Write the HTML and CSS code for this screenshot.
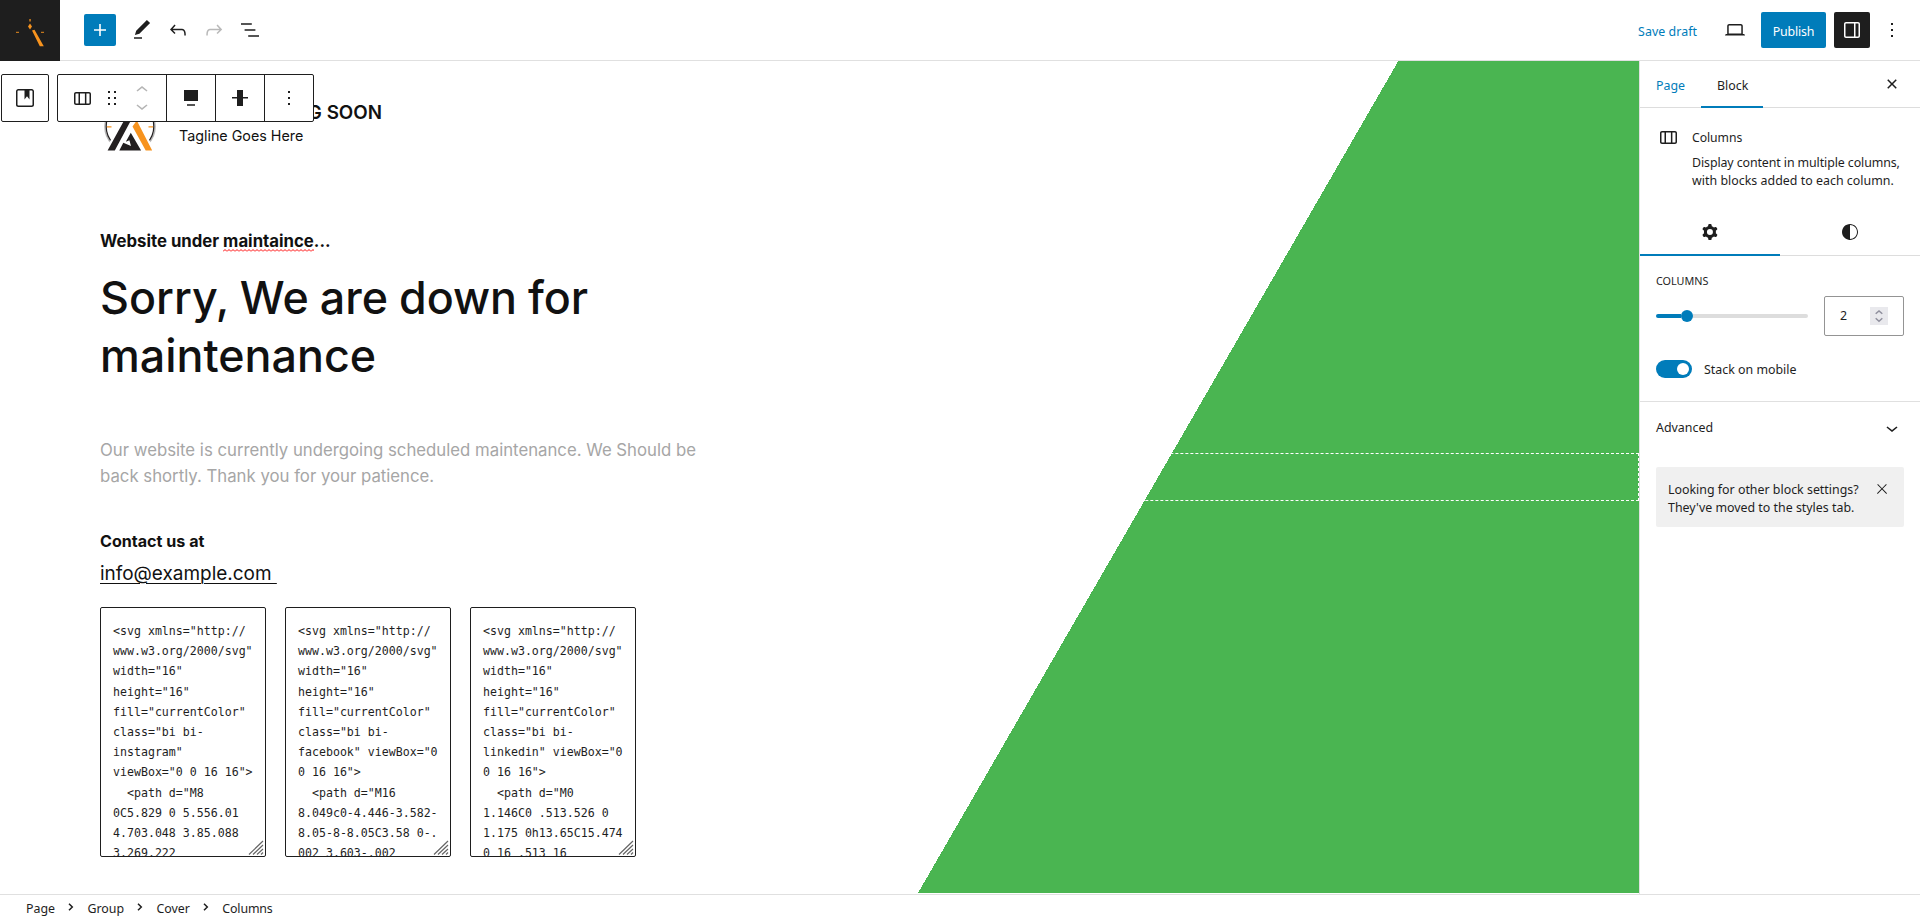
FILE: index.html
```html
<!DOCTYPE html>
<html lang="en">
<head>
<meta charset="utf-8">
<title>Edit Page</title>
<link rel="stylesheet" href="styles.css">
</head>
<body>
<header class="topbar">
  <a class="site-logo">
    <svg width="60" height="61" viewBox="0 0 60 61"><g fill="#f7931e"><path d="M32 30.5l2.5-.8 9.3 16.6h-4zM30 23.6l2 2.9-2 3-2-3z"/><path d="M29.2 19h1.7v2.5h-1.7zM16 31.8h3v1.2h-3zM41 31.8h3v1.2h-3z" opacity=".75"/></g></svg>
  </a>
  <button class="inserter"><svg class="icon" viewBox="0 0 24 24"><path d="M18 11.2h-5.2V6h-1.6v5.2H6v1.6h5.2V18h1.6v-5.2H18z"/></svg></button>
  <div class="tools">
    <button class="tool"><svg class="icon" viewBox="0 0 24 24"><path d="M20.1 5.1L16.9 2 6.2 12.7l-1.3 4.4 4.5-1.3L20.1 5.1zM4 20.8h8v-1.5H4v1.5z"/></svg></button>
    <button class="tool"><svg class="icon" viewBox="0 0 24 24"><path d="M18.3 11.7c-.6-.6-1.4-.9-2.3-.9H6.7l2.9-3.3-1.1-1-4.5 5L8.5 16l1-1-2.7-2.7H16c.5 0 .9.2 1.3.5 1 1 1 3.4 1 4.5v.3h1.5v-.2c0-1.5 0-4.3-1.5-5.7z"/></svg></button>
    <button class="tool disabled"><svg class="icon" viewBox="0 0 24 24"><path d="M15.6 6.5l-1.1 1 2.9 3.3H8c-.9 0-1.7.3-2.3.9-1.4 1.5-1.4 4.2-1.4 5.6v.2h1.5v-.3c0-1.1 0-3.5 1-4.5.3-.3.7-.5 1.3-.5h9.2L14.5 15l1.1 1.1 4.6-4.6-4.6-5z"/></svg></button>
    <button class="tool"><svg class="icon" viewBox="0 0 24 24"><path d="M13.8 5.2H3v1.5h10.8V5.2zm-3.6 12v1.5H21v-1.5H10.2zm7.2-6H6.6v1.5h10.8v-1.5z"/></svg></button>
  </div>
  <div class="actions">
    <a class="save-draft">Save draft</a>
    <button class="tool preview"><svg class="icon" viewBox="0 0 24 24"><path d="M20.5 16h-.7V8c0-1.1-.9-2-2-2H6.2c-1.1 0-2 .9-2 2v8h-.7c-.8 0-1.5.7-1.5 1.5h20c0-.8-.7-1.5-1.5-1.5zM5.7 8c0-.3.2-.5.5-.5h11.6c.3 0 .5.2.5.5v7.6H5.7V8z"/></svg></button>
    <button class="publish">Publish</button>
    <button class="tool pressed"><svg class="icon" viewBox="0 0 24 24"><path fill-rule="evenodd" d="M18 4H6c-1.1 0-2 .9-2 2v12c0 1.1.9 2 2 2h12c1.1 0 2-.9 2-2V6c0-1.1-.9-2-2-2zm-4 14.5H6c-.3 0-.5-.2-.5-.5V6c0-.3.2-.5.5-.5h8v13zm4.5-.5c0 .3-.2.5-.5.5h-2.5v-13H18c.3 0 .5.2.5.5v12z"/></svg></button>
    <button class="tool more"><svg class="icon" viewBox="0 0 24 24"><path d="M13 19h-2v-2h2v2zm0-6h-2v-2h2v2zm0-6h-2V5h2v2z"/></svg></button>
  </div>
</header>

<div class="workspace">
  <main class="canvas">
    <div class="selection"></div>
    <div class="brand">
      <svg class="brand-logo" width="60" height="60" viewBox="0 0 60 60">
        <circle cx="30" cy="29.500" r="25" fill="none" stroke="#b5b5b5" stroke-width="1.6"/>
        <circle cx="30" cy="29.500" r="23.8" fill="none" stroke="#231f20" stroke-width="1.2"/>
        <path d="M5 53.6L26 15h8l21 38.6V60H5z" fill="#fff"/>
        <path d="M7.6 53.4L26 20l5 3.3L14.8 53.4zM19.3 53.4l4-7.6 7.7 3.2-1.6-5.8-3.6 1.600 5-9 10.3 17.6z" fill="#231f20"/>
        <path d="M32.5 29.5l4.3-6 15.4 29.9h-6.5zM7 29.3h4.5v1.2H7zM48.5 29.3h4.5v1.2h-4.5z" fill="#f7931e"/>
      </svg>
      <div class="brand-text">
        <h2 class="site-title">SITE COMING SOON</h2>
        <p class="tagline">Tagline Goes Here</p>
      </div>
    </div>
    <p class="notice-line">Website under <span class="misspelled">maintaince</span>...</p>
    <h1 class="headline">Sorry, We are down for<br>maintenance</h1>
    <p class="lede">Our website is currently undergoing scheduled maintenance. We Should be<br>back shortly. Thank you for your patience.</p>
    <p class="contact">Contact us at</p>
    <p class="email"><a>info@example.com&nbsp;</a></p>
    <div class="codes">
      <div class="code"><pre>&lt;svg xmlns="http://
www.w3.org/2000/svg"
width="16"
height="16"
fill="currentColor"
class="bi bi-
instagram"
viewBox="0 0 16 16"&gt;
  &lt;path d="M8
0C5.829 0 5.556.01
4.703.048 3.85.088
3.269.222</pre><svg class="grip" viewBox="0 0 16 15"><path d="M1 14.5L15 1M5 14.5L15 5M9 14.5L15 9M13 14.5L15 12.5"/></svg></div>
      <div class="code"><pre>&lt;svg xmlns="http://
www.w3.org/2000/svg"
width="16"
height="16"
fill="currentColor"
class="bi bi-
facebook" viewBox="0
0 16 16"&gt;
  &lt;path d="M16
8.049c0-4.446-3.582-
8.05-8-8.05C3.58 0-.
002 3.603-.002</pre><svg class="grip" viewBox="0 0 16 15"><path d="M1 14.5L15 1M5 14.5L15 5M9 14.5L15 9M13 14.5L15 12.5"/></svg></div>
      <div class="code"><pre>&lt;svg xmlns="http://
www.w3.org/2000/svg"
width="16"
height="16"
fill="currentColor"
class="bi bi-
linkedin" viewBox="0
0 16 16"&gt;
  &lt;path d="M0
1.146C0 .513.526 0
1.175 0h13.65C15.474
0 16 .513 16</pre><svg class="grip" viewBox="0 0 16 15"><path d="M1 14.5L15 1M5 14.5L15 5M9 14.5L15 9M13 14.5L15 12.5"/></svg></div>
    </div>

    <div class="block-toolbar">
      <div class="bar parent"><button class="tb"><svg class="icon" viewBox="0 0 24 24"><path d="M18.7 3H5.3C4 3 3 4 3 5.3v13.4C3 20 4 21 5.3 21h13.4c1.3 0 2.3-1 2.3-2.3V5.3C21 4 20 3 18.7 3zm.8 15.7c0 .4-.4.8-.8.8H5.3c-.4 0-.8-.4-.8-.8V5.3c0-.4.4-.8.8-.8h6.2v8.9l2.5-3.1 2.5 3.1V4.5h2.2c.4 0 .8.4.8.8v13.4z"/></svg></button></div>
      <div class="bar">
        <div class="tb-group first">
          <svg class="icon" viewBox="0 0 24 24"><path fill-rule="evenodd" d="M19 6H6c-1.1 0-2 .9-2 2v9c0 1.1.9 2 2 2h13c1.1 0 2-.9 2-2V8c0-1.1-.9-2-2-2zm-4.1 1.5v10H10v-10h4.9zM5.5 17V8c0-.3.2-.5.5-.5h2.5v10H6c-.3 0-.5-.2-.5-.5zm14 0c0 .3-.2.5-.5.5h-2.6v-10H19c.3 0 .5.2.5.5v9z"/></svg>
          <svg class="icon drag" viewBox="0 0 24 24"><path d="M8 7h2V5H8v2zm0 6h2v-2H8v2zm0 6h2v-2H8v2zm6-14v2h2V5h-2zm0 8h2v-2h-2v2zm0 6h2v-2h-2v2z"/></svg>
          <div class="movers">
            <svg class="icon" viewBox="0 0 24 24"><path d="M6.5 12.4L12 8l5.5 4.4-.9 1.2L12 10l-4.5 3.6-1-1.2z"/></svg>
            <svg class="icon" viewBox="0 0 24 24"><path d="M17.5 11.6L12 16l-5.5-4.4.9-1.2L12 14l4.5-3.6 1 1.2z"/></svg>
          </div>
        </div>
        <div class="tb-group"><svg class="icon" viewBox="0 0 24 24"><path d="M5 4v11h14V4H5zm3 15.8h8v-1.5H8v1.5z"/></svg></div>
        <div class="tb-group"><svg class="icon" viewBox="0 0 24 24"><path d="M20 11h-5V4H9v7H4v1.5h5V20h6v-7.5h5z"/></svg></div>
        <div class="tb-group"><svg class="icon" viewBox="0 0 24 24"><path d="M13 19h-2v-2h2v2zm0-6h-2v-2h2v2zm0-6h-2V5h2v2z"/></svg></div>
      </div>
    </div>
  </main>

  <aside class="sidebar">
    <div class="tabs">
      <button class="tab link">Page</button>
      <button class="tab active">Block</button>
      <svg class="icon close" viewBox="0 0 24 24"><path d="M12 13.06l3.712 3.713 1.061-1.06L13.061 12l3.712-3.712-1.06-1.06L12 10.938 8.288 7.227l-1.061 1.06L10.939 12l-3.712 3.712 1.06 1.061L12 13.061z"/></svg>
    </div>
    <div class="card">
      <svg class="icon" viewBox="0 0 24 24"><path fill-rule="evenodd" d="M19 6H6c-1.1 0-2 .9-2 2v9c0 1.1.9 2 2 2h13c1.1 0 2-.9 2-2V8c0-1.1-.9-2-2-2zm-4.1 1.5v10H10v-10h4.9zM5.5 17V8c0-.3.2-.5.5-.5h2.5v10H6c-.3 0-.5-.2-.5-.5zm14 0c0 .3-.2.5-.5.5h-2.6v-10H19c.3 0 .5.2.5.5v9z"/></svg>
      <div>
        <h3 class="card-title">Columns</h3>
        <p class="card-desc">Display content in multiple columns,<br><span class="loose">with blocks added to each column.</span></p>
      </div>
    </div>
    <div class="icon-tabs">
      <button class="icon-tab active"><svg class="icon" viewBox="0 0 24 24"><path fill-rule="evenodd" d="M10.289 4.836A1 1 0 0111.275 4h1.306a1 1 0 01.987.836l.244 1.466c.787.26 1.503.679 2.108 1.218l1.393-.522a1 1 0 011.216.437l.653 1.13a1 1 0 01-.23 1.273l-1.148.944a6.025 6.025 0 010 2.435l1.149.946a1 1 0 01.23 1.272l-.653 1.13a1 1 0 01-1.216.437l-1.394-.522c-.605.54-1.32.958-2.108 1.218l-.244 1.466a1 1 0 01-.987.836h-1.306a1 1 0 01-.986-.836l-.244-1.466a5.995 5.995 0 01-2.108-1.218l-1.394.522a1 1 0 01-1.217-.436l-.653-1.131a1 1 0 01.23-1.272l1.149-.946a6.026 6.026 0 010-2.435l-1.148-.944a1 1 0 01-.23-1.272l.653-1.131a1 1 0 011.217-.437l1.393.522a5.994 5.994 0 012.108-1.218l.244-1.466zM14.929 12a3 3 0 11-6 0 3 3 0 016 0z"/></svg></button>
      <button class="icon-tab"><svg class="icon" viewBox="0 0 24 24"><path fill-rule="evenodd" d="M12 4c-4.4 0-8 3.6-8 8v.1c0 4.1 3.2 7.5 7.2 7.9h.8c4.4 0 8-3.6 8-8s-3.6-8-8-8zm0 15V5c3.9 0 7 3.1 7 7s-3.1 7-7 7z"/></svg></button>
    </div>
    <section class="settings">
      <h4 class="label">COLUMNS</h4>
      <div class="range-row">
        <div class="range"><div class="fill"></div><div class="thumb"></div><div class="rest"></div></div>
        <div class="number"><span>2</span>
          <svg class="spin" width="18" height="18" viewBox="0 0 18 18"><rect width="18" height="18" fill="#e9e9ed"/><path d="M5.7 6.8L9 3.9l3.3 2.9M5.7 11.3L9 14.2l3.3-2.9" fill="none" stroke="#8f8f9d" stroke-width="1.5"/></svg>
        </div>
      </div>
      <div class="toggle-row"><span class="toggle"><i class="knob"></i></span><span class="toggle-label">Stack on mobile</span></div>
    </section>
    <div class="advanced"><span>Advanced</span><svg class="icon" viewBox="0 0 24 24"><path d="M17.5 11.6L12 16l-5.5-4.4.9-1.2L12 14l4.5-3.6 1 1.2z"/></svg></div>
    <div class="hint">
      <p>Looking for other block settings?<br>They've moved to the styles tab.</p>
      <svg class="hint-close" width="16" height="16" viewBox="0 0 24 24"><path d="M13 11.8l6.1-6.3-1-1-6.1 6.2-6.1-6.2-1 1 6.1 6.3-6.5 6.7 1 1 6.5-6.6 6.5 6.6 1-1z"/></svg>
    </div>
  </aside>
</div>

<footer class="breadcrumb">
  <span>Page</span><svg class="sep" viewBox="0 0 6 8"><path d="M1 .7l3.3 3.3L1 7.3"/></svg>
  <span>Group</span><svg class="sep" viewBox="0 0 6 8"><path d="M1 .7l3.3 3.3L1 7.3"/></svg>
  <span>Cover</span><svg class="sep" viewBox="0 0 6 8"><path d="M1 .7l3.3 3.3L1 7.3"/></svg>
  <span class="current">Columns</span>
</footer>
</body>
</html>
```
FILE: styles.css
```css
* { box-sizing: border-box; }
body {
  margin: 0;
  width: 1920px;
  height: 919px;
  display: flex;
  flex-direction: column;
  overflow: hidden;
  background: #fff;
  color: #1e1e1e;
  font: 12.4px/18px "Noto Sans", sans-serif;
}
h1, h2, h3, h4, p, pre { margin: 0; font-weight: 400; }
button { border: 0; padding: 0; background: none; font: inherit; color: inherit; }
svg { display: block; flex: none; }
.icon { width: 24px; height: 24px; fill: currentColor; }

/* Top bar */
.topbar { height: 61px; flex: none; display: flex; align-items: center; border-bottom: 1px solid #e0e0e0; }
.site-logo { width: 60px; height: 61px; background: #1e1e1e; margin-bottom: -1px; }
.inserter {
  width: 32px; height: 32px; margin-left: 24px; border-radius: 2px;
  background: #007cba; color: #fff; display: flex; align-items: center; justify-content: center;
}
.tools { display: flex; margin-left: 8px; }
.tool { width: 36px; height: 36px; display: flex; align-items: center; justify-content: center; }
.disabled { color: #b9b9b9; }
.actions { display: flex; align-items: center; margin-left: auto; padding-right: 10px; }
.save-draft { color: #007cba; padding-top: 3px; letter-spacing: .05px; }
.preview { margin: 0 8px 0 20px; }
.publish { width: 65px; height: 36px; padding-top: 3px; border-radius: 2px; background: #007cba; color: #fff; letter-spacing: -.2px; margin-right: 8px; }
.pressed { background: #1e1e1e; color: #fff; border-radius: 2px; }
.more { margin-left: 4px; }

/* Canvas */
.workspace { height: 833px; flex: none; display: flex; }
.canvas {
  position: relative;
  width: 1639px;
  padding: 36px 0 0 100px;
  font-family: Inter, sans-serif;
  color: #111;
  background: linear-gradient(120deg, #fff 1211px, #4ab551 1211px);
  border-bottom: 1px solid #fff;
}
.selection {
  position: absolute; left: 900px; right: 0; top: 392px; height: 48px;
  border: 1px dashed #fff;
}
.brand { display: flex; height: 60px; }
.brand-text { margin: 4px 0 0 19px; }
.site-title { width: 203px; text-align: right; white-space: nowrap; font-size: 18.8px; line-height: 24px; font-weight: 600; }
.tagline { margin-top: 1px; font-size: 14.3px; line-height: 20px; }
.notice-line { margin-top: 73px; font-size: 16.75px; line-height: 22px; font-weight: 700; }
/* Spell-check squiggle */
.misspelled {
  padding-bottom: 1px;
  background: url("data:image/svg+xml,%3Csvg xmlns='http://www.w3.org/2000/svg' width='4' height='3'%3E%3Cpath d='M0 2.5L2 .5L4 2.5' fill='none' stroke='%23f00'/%3E%3C/svg%3E") left bottom repeat-x;
}
.headline { margin-top: 17px; font-size: 44.8px; line-height: 58px; font-weight: 500; word-spacing: -1px; }
.lede { margin-top: 52px; font-size: 16.75px; line-height: 26px; color: #a6a6a6; }
.contact { margin-top: 41px; font-size: 16.1px; line-height: 22px; font-weight: 700; }
.email { margin-top: 9px; font-size: 18.95px; line-height: 26px; }
.email a { text-decoration: underline 1px; text-underline-offset: 3px; }
.codes { display: flex; gap: 19px; margin-top: 20px; }
.code {
  position: relative; width: 166px; height: 250px; padding: 13px 12px 0;
  border: 1px solid #1e1e1e; border-radius: 2px; background: #fff; overflow: hidden;
}
.code pre { font: 11.6px/20.18px "DejaVu Sans Mono", monospace; color: #1e1e1e; }
.grip { position: absolute; right: 1px; bottom: 1px; width: 16px; height: 15px; fill: none; stroke: #666; stroke-width: 1.2; }

/* Floating block toolbar */
.block-toolbar { position: absolute; left: 1px; top: 13px; display: flex; gap: 8px; color: #1e1e1e; }
.bar { display: flex; height: 48px; background: #fff; border: 1px solid #1e1e1e; border-radius: 2px; }
.parent { width: 48px; }
.tb { width: 46px; display: flex; align-items: center; justify-content: center; }
.tb-group { width: 49px; display: flex; align-items: center; justify-content: center; border-left: 1px solid #1e1e1e; }
.tb-group.first { width: 108px; border-left: 0; justify-content: flex-start; padding-left: 12px; }
.drag { margin-left: 6px; }
.movers { margin-left: 6px; color: #b5b5b5; display: flex; flex-direction: column; }
.movers .icon + .icon { margin-top: -8px; }

/* Sidebar */
.sidebar { width: 281px; border-left: 1px solid #e0e0e0; background: #fff; }
.tabs { display: flex; height: 47px; border-bottom: 1px solid #ddd; align-items: stretch; padding-right: 16px; }
.tab { padding: 3px 16px 0; height: 47px; }
.tab.link { color: #007cba; width: 61px; }
.tab.active { width: 62px; box-shadow: inset 0 -2px #007cba; }
.close { margin: 11px 0 0 auto; }
.card { display: flex; gap: 12px; padding: 17px 16px 0; height: 111px; }
.card-title { font-size: 12.2px; line-height: 18px; margin-top: 4px; letter-spacing: -.05px; }
.card-desc { margin-top: 7px; letter-spacing: -.1px; white-space: nowrap; }
.loose { letter-spacing: .02px; }
.icon-tabs { display: flex; height: 37px; border-bottom: 1px solid #ddd; }
.icon-tab { width: 140px; height: 37px; padding-top: 1px; display: flex; justify-content: center; }
.icon-tab.active { box-shadow: inset 0 -2px #007cba; }
.settings { height: 146px; padding: 16px 16px 0; border-bottom: 1px solid #e0e0e0; }
.label { font-size: 10.8px; line-height: 18px; }
.range-row { display: flex; align-items: center; justify-content: space-between; margin-top: 6px; }
.range { width: 152px; display: flex; align-items: center; }
.fill { width: 25px; height: 4px; background: #007cba; border-radius: 2px 0 0 2px; }
.thumb { width: 12px; height: 12px; border-radius: 50%; background: #007cba; }
.rest { flex: 1; height: 4px; background: #ddd; border-radius: 0 2px 2px 0; }
.number { width: 80px; height: 40px; padding: 1px 15px; border: 1px solid #949494; border-radius: 2px; display: flex; align-items: center; justify-content: space-between; }
.toggle-row { display: flex; align-items: flex-start; gap: 12px; margin-top: 24px; }
.toggle { width: 36px; height: 18px; border-radius: 9px; background: #007cba; display: flex; justify-content: flex-end; padding: 3px; }
.toggle-label { padding-top: 1px; }
.knob { width: 12px; height: 12px; border-radius: 50%; background: #fff; }
.advanced { display: flex; justify-content: space-between; align-items: center; padding: 2px 16px 0; height: 50px; }
.hint { display: flex; justify-content: space-between; margin: 15px 16px 0; height: 60px; padding: 14px 14px 0 12px; background: #f0f0f0; border-radius: 2px; }
.hint-close { fill: #1e1e1e; }

/* Breadcrumb */
.breadcrumb { flex: 1; display: flex; align-items: flex-start; padding: 5px 0 0 26px; border-top: 1px solid #e0e0e0; }
.sep { width: 6px; height: 8px; margin: 3px 13.2px 0; fill: none; stroke: #1e1e1e; stroke-width: 1.5; }
.current { letter-spacing: -.15px; }
```
